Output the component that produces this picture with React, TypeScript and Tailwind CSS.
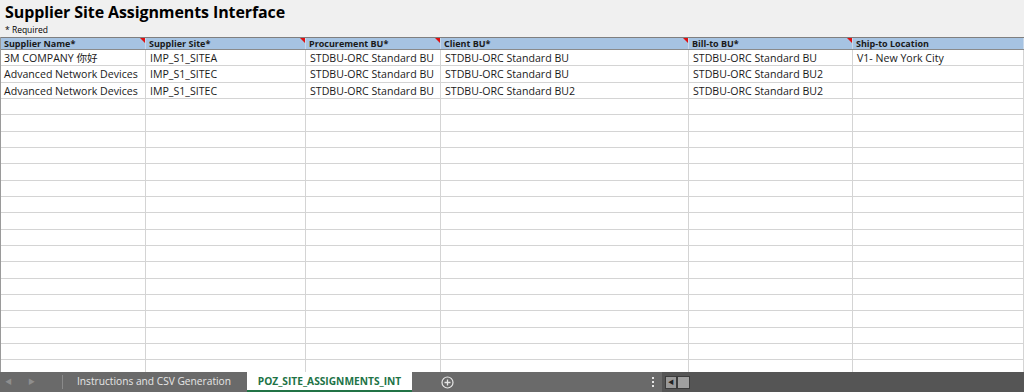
import { Fragment } from "react";

const COLS = [
  { label: "Supplier Name*", w: "w-[145px]", flag: true },
  { label: "Supplier Site*", w: "w-[160px]", flag: true },
  { label: "Procurement BU*", w: "w-[135px]", flag: true },
  { label: "Client BU*", w: "w-[248px]", flag: true },
  { label: "Bill-to BU*", w: "w-[164px]", flag: true },
  { label: "Ship-to Location", w: "flex-1", flag: false },
];

const DATA = [
  ["3M COMPANY 你好", "IMP_S1_SITEA", "STDBU-ORC Standard BU", "STDBU-ORC Standard BU", "STDBU-ORC Standard BU", "V1- New York City"],
  ["Advanced Network Devices", "IMP_S1_SITEC", "STDBU-ORC Standard BU", "STDBU-ORC Standard BU", "STDBU-ORC Standard BU2", ""],
  ["Advanced Network Devices", "IMP_S1_SITEC", "STDBU-ORC Standard BU", "STDBU-ORC Standard BU2", "STDBU-ORC Standard BU2", ""],
];

const ROWS = [...DATA, ...Array.from({ length: 18 }, () => ["", "", "", "", "", ""])];

function Row({ cells, i }: { cells: string[]; i: number }) {
  return (
    <div className={`flex border-b border-[#d4d4d4] ${i % 3 === 1 ? "h-[17px]" : "h-4"}`}>
      {COLS.map((c, j) => (
        <div
          key={j}
          className={`${c.w} shrink-0 overflow-hidden whitespace-nowrap border-r border-[#d4d4d4] text-[10.6px] leading-[16px] text-[#1a1a1a] ${j === 0 ? "pl-[3px]" : "pl-[4px]"}`}
        >
          {cells[j]}
        </div>
      ))}
    </div>
  );
}

export default function App() {
  return (
    <div
      className="flex h-[392px] w-[1024px] flex-col overflow-hidden bg-white"
      style={{ fontFamily: '"Open Sans", "Liberation Sans", "Noto Sans CJK SC", sans-serif' }}
    >
      <div className="h-[37px] shrink-0 bg-[#f0f0f0] pl-[5px]">
        <div className="pt-[1px] text-[16px] font-bold leading-[22px] tracking-[-0.1px] text-black">
          Supplier Site Assignments Interface
        </div>
        <div className="pl-[-2px] pt-[2px] text-[8.5px] leading-[10px] text-black">* Required</div>
      </div>

      <div className="flex-1 overflow-hidden border-l border-[#9a9a9a]">
        <div className="flex h-[13px] border-y border-t-[#7f7f7f] border-b-[#8a8a8a] bg-[#a6c3e2]">
          {COLS.map((c, j) => (
            <div
              key={j}
              className={`${c.w} relative shrink-0 overflow-hidden whitespace-nowrap border-r border-[#c8d8ea] pl-[3px] text-[9px] font-bold leading-[11px] text-[#1a1a1a]`}
            >
              {c.label}
              {c.flag && (
                <span className="absolute right-0 top-0 h-0 w-0 border-l-[5px] border-t-[5px] border-l-transparent border-t-[#e01010]" />
              )}
            </div>
          ))}
        </div>
        {ROWS.map((r, i) => (
          <Fragment key={i}>
            <Row cells={r} i={i} />
          </Fragment>
        ))}
      </div>

      <div className="flex h-[20px] shrink-0 items-stretch bg-[#6a6a6a] text-[10.2px]">
        <div className="flex w-[62px] items-center gap-[16px] pl-[5px] text-[#8e8e8e]">
          <span className="text-[7px]">◀</span>
          <span className="text-[7px]">▶</span>
        </div>
        <div className="my-[3px] w-px bg-[#8a8a8a]" />
        <div className="flex w-[184px] items-center pl-[14px] text-[#e6e6e6]">
          Instructions and CSV Generation
        </div>
        <div className="flex w-[165px] items-center justify-center border-b-2 border-[#217346] bg-white pt-[2px] font-bold text-[#217346]">
          POZ_SITE_ASSIGNMENTS_INT
        </div>
        <div className="flex w-[70px] items-center justify-center">
          <svg width="13" height="13" viewBox="0 0 13 13">
            <circle cx="6.5" cy="6.5" r="5.5" fill="none" stroke="#e6e6e6" strokeWidth="1.2" />
            <path d="M6.5 3.5v6M3.5 6.5h6" stroke="#e6e6e6" strokeWidth="1.3" />
          </svg>
        </div>
        <div className="flex w-[180px] items-center justify-end pr-[8px]">
          <div className="flex flex-col gap-[2px]">
            <span className="h-[2px] w-[2px] bg-[#e6e6e6]" />
            <span className="h-[2px] w-[2px] bg-[#e6e6e6]" />
            <span className="h-[2px] w-[2px] bg-[#e6e6e6]" />
          </div>
        </div>
        <div className="flex flex-1 items-center bg-[#555555] py-[3px] pl-[3px]">
          <div className="flex h-[13px] w-[12px] items-center justify-center border border-[#3c3c3c] bg-[#9a9a9a] text-[6px] text-[#222]">
            ◀
          </div>
          <div className="h-[13px] w-[13px] border border-[#3c3c3c] bg-[#a0a0a0]" />
        </div>
      </div>
    </div>
  );
}
